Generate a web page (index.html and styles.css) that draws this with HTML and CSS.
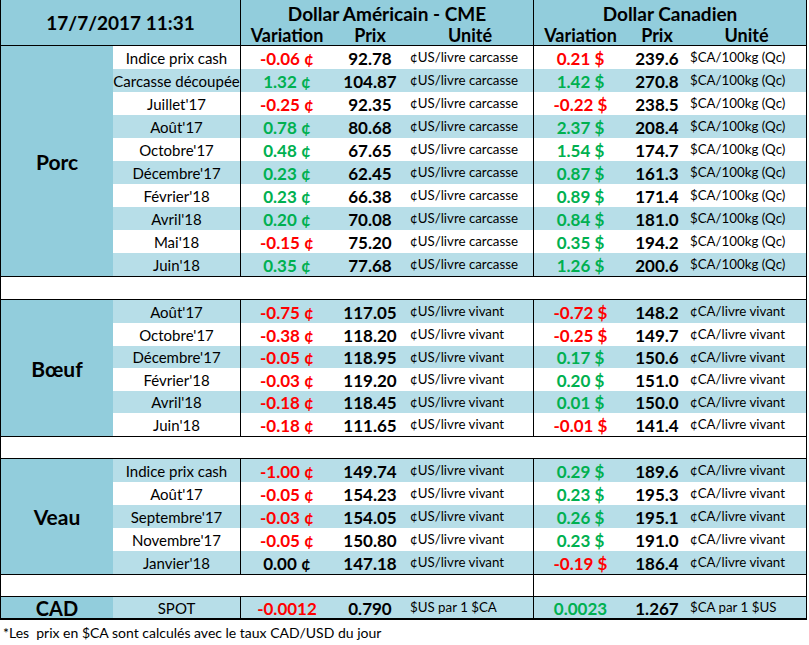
FILE: index.html
```html
<!DOCTYPE html>
<html lang="fr">
<head>
<meta charset="utf-8">
<title>Prix</title>
<link rel="stylesheet" href="styles.css">
</head>
<body>
<div class="sheet">
  <div class="hd date">17/7/2017 11:31</div>
  <div class="hd sec us">Dollar Américain - CME</div>
  <div class="hd sec ca">Dollar Canadien</div>
  <div class="hd sub vl">Variation</div><div class="hd sub">Prix</div><div class="hd sub">Unité</div>
  <div class="hd sub vl">Variation</div><div class="hd sub">Prix</div><div class="hd sub end">Unité</div>

  <div class="cat span10">Porc</div>
  <div class="row w"><div class="lbl">Indice prix cash</div><div class="var r">-0.06 ¢</div><div class="prx">92.78</div><div class="unit">¢US/livre carcasse</div><div class="var r">0.21 $</div><div class="prx">239.6</div><div class="unit">$CA/100kg (Qc)</div></div>
  <div class="row b"><div class="lbl">Carcasse découpée</div><div class="var g">1.32 ¢</div><div class="prx">104.87</div><div class="unit">¢US/livre carcasse</div><div class="var g">1.42 $</div><div class="prx">270.8</div><div class="unit">$CA/100kg (Qc)</div></div>
  <div class="row w"><div class="lbl">Juillet'17</div><div class="var r">-0.25 ¢</div><div class="prx">92.35</div><div class="unit">¢US/livre carcasse</div><div class="var r">-0.22 $</div><div class="prx">238.5</div><div class="unit">$CA/100kg (Qc)</div></div>
  <div class="row b"><div class="lbl">Août'17</div><div class="var g">0.78 ¢</div><div class="prx">80.68</div><div class="unit">¢US/livre carcasse</div><div class="var g">2.37 $</div><div class="prx">208.4</div><div class="unit">$CA/100kg (Qc)</div></div>
  <div class="row w"><div class="lbl">Octobre'17</div><div class="var g">0.48 ¢</div><div class="prx">67.65</div><div class="unit">¢US/livre carcasse</div><div class="var g">1.54 $</div><div class="prx">174.7</div><div class="unit">$CA/100kg (Qc)</div></div>
  <div class="row b"><div class="lbl">Décembre'17</div><div class="var g">0.23 ¢</div><div class="prx">62.45</div><div class="unit">¢US/livre carcasse</div><div class="var g">0.87 $</div><div class="prx">161.3</div><div class="unit">$CA/100kg (Qc)</div></div>
  <div class="row w"><div class="lbl">Février'18</div><div class="var g">0.23 ¢</div><div class="prx">66.38</div><div class="unit">¢US/livre carcasse</div><div class="var g">0.89 $</div><div class="prx">171.4</div><div class="unit">$CA/100kg (Qc)</div></div>
  <div class="row b"><div class="lbl">Avril'18</div><div class="var g">0.20 ¢</div><div class="prx">70.08</div><div class="unit">¢US/livre carcasse</div><div class="var g">0.84 $</div><div class="prx">181.0</div><div class="unit">$CA/100kg (Qc)</div></div>
  <div class="row w"><div class="lbl">Mai'18</div><div class="var r">-0.15 ¢</div><div class="prx">75.20</div><div class="unit">¢US/livre carcasse</div><div class="var g">0.35 $</div><div class="prx">194.2</div><div class="unit">$CA/100kg (Qc)</div></div>
  <div class="row b"><div class="lbl">Juin'18</div><div class="var g">0.35 ¢</div><div class="prx">77.68</div><div class="unit">¢US/livre carcasse</div><div class="var g">1.26 $</div><div class="prx">200.6</div><div class="unit">$CA/100kg (Qc)</div></div>
  <div class="gap full tall"></div>

  <div class="cat span6">Bœuf</div>
  <div class="row b"><div class="lbl">Août'17</div><div class="var r">-0.75 ¢</div><div class="prx">117.05</div><div class="unit">¢US/livre vivant</div><div class="var r">-0.72 $</div><div class="prx">148.2</div><div class="unit">¢CA/livre vivant</div></div>
  <div class="row w"><div class="lbl">Octobre'17</div><div class="var r">-0.38 ¢</div><div class="prx">118.20</div><div class="unit">¢US/livre vivant</div><div class="var r">-0.25 $</div><div class="prx">149.7</div><div class="unit">¢CA/livre vivant</div></div>
  <div class="row b s"><div class="lbl">Décembre'17</div><div class="var r">-0.05 ¢</div><div class="prx">118.95</div><div class="unit">¢US/livre vivant</div><div class="var g">0.17 $</div><div class="prx">150.6</div><div class="unit">¢CA/livre vivant</div></div>
  <div class="row w"><div class="lbl">Février'18</div><div class="var r">-0.03 ¢</div><div class="prx">119.20</div><div class="unit">¢US/livre vivant</div><div class="var g">0.20 $</div><div class="prx">151.0</div><div class="unit">¢CA/livre vivant</div></div>
  <div class="row b s"><div class="lbl">Avril'18</div><div class="var r">-0.18 ¢</div><div class="prx">118.45</div><div class="unit">¢US/livre vivant</div><div class="var g">0.01 $</div><div class="prx">150.0</div><div class="unit">¢CA/livre vivant</div></div>
  <div class="row w"><div class="lbl">Juin'18</div><div class="var r">-0.18 ¢</div><div class="prx">111.65</div><div class="unit">¢US/livre vivant</div><div class="var r">-0.01 $</div><div class="prx">141.4</div><div class="unit">¢CA/livre vivant</div></div>
  <div class="gap full"></div>

  <div class="cat span5">Veau</div>
  <div class="row b"><div class="lbl">Indice prix cash</div><div class="var r">-1.00 ¢</div><div class="prx">149.74</div><div class="unit">¢US/livre vivant</div><div class="var g">0.29 $</div><div class="prx">189.6</div><div class="unit">¢CA/livre vivant</div></div>
  <div class="row w"><div class="lbl">Août'17</div><div class="var r">-0.05 ¢</div><div class="prx">154.23</div><div class="unit">¢US/livre vivant</div><div class="var g">0.23 $</div><div class="prx">195.3</div><div class="unit">¢CA/livre vivant</div></div>
  <div class="row b"><div class="lbl">Septembre'17</div><div class="var r">-0.03 ¢</div><div class="prx">154.05</div><div class="unit">¢US/livre vivant</div><div class="var g">0.26 $</div><div class="prx">195.1</div><div class="unit">¢CA/livre vivant</div></div>
  <div class="row w"><div class="lbl">Novembre'17</div><div class="var r">-0.05 ¢</div><div class="prx">150.80</div><div class="unit">¢US/livre vivant</div><div class="var g">0.23 $</div><div class="prx">191.0</div><div class="unit">¢CA/livre vivant</div></div>
  <div class="row b"><div class="lbl">Janvier'18</div><div class="var k">0.00 ¢</div><div class="prx">147.18</div><div class="unit">¢US/livre vivant</div><div class="var r">-0.19 $</div><div class="prx">186.4</div><div class="unit">¢CA/livre vivant</div></div>
  <div class="gap left"></div><div class="gap right"></div>

  <div class="cat last">CAD</div>
  <div class="row b last"><div class="lbl">SPOT</div><div class="var r">-0.0012</div><div class="prx">0.790</div><div class="unit">$US par 1 $CA</div><div class="var g">0.0023</div><div class="prx">1.267</div><div class="unit">$CA par 1 $US</div></div>
</div>
<p class="note">*Les&nbsp; prix en $CA sont calculés avec le taux CAD/USD du jour</p>
</body>
</html>
```
FILE: styles.css
```css
html, body {
  margin: 0;
  padding: 0;
  background: #ffffff;
}
body {
  font-family: Lato, "Open Sans", sans-serif;
  color: #000;
}
.sheet {
  display: grid;
  grid-template-columns: 113px 127px 93px 74px 126px 94px 60px 120px;
  width: 807px;
  font-size: 15px;
}
.sheet > div:not(.row),
.row > div {
  box-sizing: border-box;
  display: flex;
  align-items: center;
  justify-content: center;
  white-space: nowrap;
  line-height: 1;
}
.sheet > .row { display: contents; }
.row > div { height: 23px; padding-top: 1px; }
.row.s > div { height: 22px; }
.row > div:last-child { border-right: 1px solid #000; }
.w > div { background: #ffffff; }
.b > div { background: #b7dee8; }

/* header */
.hd {
  background: #92cddc;
  font-weight: 700;
  height: 23px;
}
.sheet .date {
  grid-column: span 2;
  grid-row: span 2;
  height: 46px;
  font-size: 19px;
  border-left: 1px solid #000;
  border-bottom: 1px solid #000;
}
.sec {
  grid-column: span 3;
  font-size: 19px;
  border-left: 1px solid #000;
  padding-top: 3px;
}
.sec.ca { border-right: 1px solid #000; }
.sub {
  font-size: 18px;
  border-bottom: 1px solid #000;
  padding-top: 1px;
}
.sub.vl { border-left: 1px solid #000; }
.sub.end { border-right: 1px solid #000; }

/* category */
.cat {
  background: #92cddc;
  border-left: 1px solid #000;
  font-size: 21px;
  font-weight: 700;
}
.span10 { grid-row: span 10; }
.span6 { grid-row: span 6; }
.span5 { grid-row: span 5; }
.cat.last {
  height: 23px;
  font-size: 20px;
  border-bottom: 2px solid #000;
}

/* cells */
.var {
  border-left: 1px solid #000;
  font-weight: 700;
  font-size: 17px;
}
.prx { font-weight: 700; font-size: 17px; }
.row .unit {
  justify-content: flex-start;
  padding-left: 3px;
  font-size: 13.3px;
}
.r { color: #ff0000; }
.g { color: #00b050; }
.k { color: #000; }
.row.last > div { border-bottom: 2px solid #000; }

/* spacer rows */
.gap {
  height: 23px;
  background: #fff;
  border-top: 1px solid #000;
  border-bottom: 1px solid #000;
}
.gap.full {
  grid-column: 1 / -1;
  border-left: 1px solid #000;
  border-right: 1px solid #000;
}
.sheet .gap.tall { height: 24px; }
.gap.left { grid-column: span 5; border-left: 1px solid #000; }
.gap.right { grid-column: span 3; border-left: 1px solid #000; border-right: 1px solid #000; }

.note {
  margin: 5px 0 0 3px;
  font-size: 14px;
  line-height: 16px;
}
```
